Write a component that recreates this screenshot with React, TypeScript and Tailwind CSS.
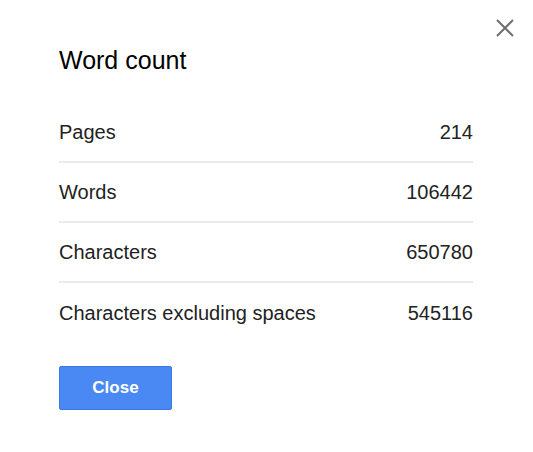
const rows = [
  { label: "Pages", value: "214" },
  { label: "Words", value: "106442" },
  { label: "Characters", value: "650780" },
  { label: "Characters excluding spaces", value: "545116" },
];

export default function App() {
  return (
    <div className="relative h-[452px] w-[533px] bg-white font-['Liberation_Sans',Arial,sans-serif] text-[#222]">
      <button
        aria-label="Close"
        className="absolute right-[19px] top-[19px] flex size-[18px] items-center justify-center"
      >
        <svg width="18" height="18" viewBox="0 0 18 18">
          <path d="M1 1L17 17M17 1L1 17" stroke="#6f6f6f" strokeWidth="2" />
        </svg>
      </button>

      <div className="px-[59px] pt-[45px]">
        <h1 className="text-[25px] leading-[30px] text-black">Word count</h1>

        <div className="mt-[28px] w-[414px]">
          {rows.map((row, i) => (
            <div
              key={row.label}
              className={
                "flex h-[60px] items-center justify-between text-[20px] " +
                (i < rows.length - 1 ? "border-b-2 border-[#ebebeb]" : "")
              }
            >
              <span>{row.label}</span>
              <span>{row.value}</span>
            </div>
          ))}
        </div>

        <button className="mt-[23px] h-[44px] w-[113px] rounded-[2px] border border-[#3a7ae6] bg-[#4a89f3] text-[17px] font-bold text-white">
          Close
        </button>
      </div>
    </div>
  );
}
